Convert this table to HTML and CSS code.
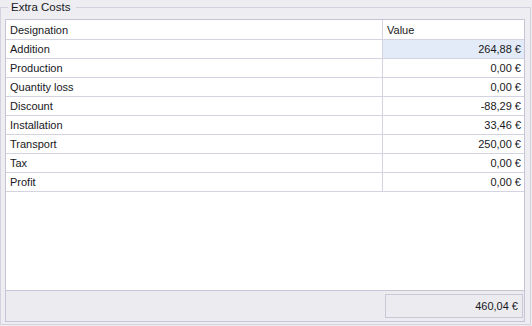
FILE: index.html
```html
<!DOCTYPE html>
<html>
<head>
<meta charset="utf-8">
<link rel="stylesheet" href="styles.css">
</head>
<body>
<fieldset class="group">
  <legend class="group-title">Extra Costs</legend>
  <div class="grid">
    <div class="table">
      <div class="row head">
        <div class="cell name">Designation</div>
        <div class="cell value head-value">Value</div>
      </div>
      <div class="row">
        <div class="cell name">Addition</div>
        <div class="cell value selected">264,88 €</div>
      </div>
      <div class="row">
        <div class="cell name">Production</div>
        <div class="cell value">0,00 €</div>
      </div>
      <div class="row">
        <div class="cell name">Quantity loss</div>
        <div class="cell value">0,00 €</div>
      </div>
      <div class="row">
        <div class="cell name">Discount</div>
        <div class="cell value">-88,29 €</div>
      </div>
      <div class="row">
        <div class="cell name">Installation</div>
        <div class="cell value">33,46 €</div>
      </div>
      <div class="row">
        <div class="cell name">Transport</div>
        <div class="cell value">250,00 €</div>
      </div>
      <div class="row">
        <div class="cell name">Tax</div>
        <div class="cell value">0,00 €</div>
      </div>
      <div class="row">
        <div class="cell name">Profit</div>
        <div class="cell value">0,00 €</div>
      </div>
    </div>
    <div class="footer">
      <div class="total">460,04 €</div>
    </div>
  </div>
</fieldset>
</body>
</html>
```
FILE: styles.css
```css
html, body {
  margin: 0;
  padding: 0;
  background: #eeedf2;
}

body {
  font-family: "Liberation Sans", Arial, sans-serif;
  font-size: 11px;
  color: #18181c;
  width: 532px;
  height: 326px;
  overflow: hidden;
}

.group {
  margin: 0;
  width: 531px;
  height: 325px;
  box-sizing: border-box;
  border: 1px solid #d3d2de;
  padding: 5px 5px 2px 4px;
  min-width: 0;
}

.group-title {
  margin-left: 3px;
  padding: 0 6px 0 3px;
  line-height: 14px;
  font-size: 11.5px;
}

.grid {
  height: 303px;
  box-sizing: border-box;
  border: 1px solid #c6c5d6;
  background: #ffffff;
  display: flex;
  flex-direction: column;
}

.table {
  flex: 1;
  display: flex;
  flex-direction: column;
}

.row {
  display: grid;
  grid-template-columns: 377px 1fr;
  height: 19px;
  border-bottom: 1px solid #d4d3e2;
  box-sizing: border-box;
}

.row.head {
  height: 20px;
}

.cell {
  display: flex;
  align-items: center;
  padding: 0 4px;
  white-space: nowrap;
}

.name {
  border-right: 1px solid #d4d3e2;
}

.value {
  justify-content: flex-end;
  padding-right: 3px;
}

.head-value {
  justify-content: flex-start;
  padding-left: 4px;
}

.selected {
  background: #e2ebf7;
}

.footer {
  height: 31px;
  box-sizing: border-box;
  border-top: 1px solid #c6c5d6;
  background: #ecebf0;
  display: flex;
  justify-content: flex-end;
  padding: 3px 1px 3px 0;
}

.total {
  width: 138px;
  box-sizing: border-box;
  border: 1px solid #c9c8d8;
  display: flex;
  align-items: center;
  justify-content: flex-end;
  padding-right: 4px;
}
```
